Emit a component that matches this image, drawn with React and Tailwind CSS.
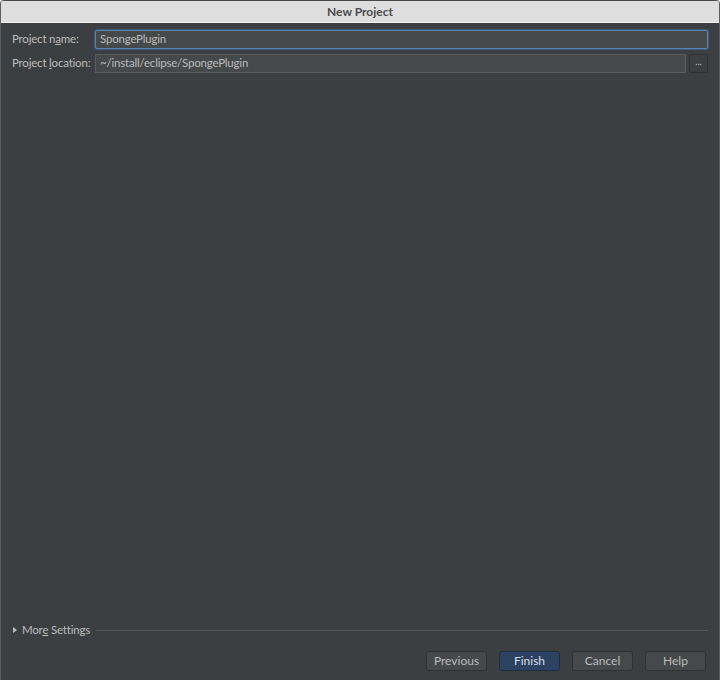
import React from "react";

const font = { fontFamily: 'Lato, "Noto Sans", sans-serif' };

function Btn({ children, primary }) {
  return (
    <div
      className={
        "w-[61px] h-[20px] flex items-center justify-center rounded-[3px] border text-[12px] whitespace-nowrap " +
        (primary
          ? "bg-[#2c4263] border-[#1f2d40] text-[#d8dde4]"
          : "bg-[#45494a] border-[#2f3233] text-[#bbbbbb]")
      }
    >
      {children}
    </div>
  );
}

export default function App() {
  return (
    <div
      className="w-[720px] h-[680px] flex flex-col bg-[#3c3f41] border-l border-r border-[#5a5d5f] overflow-hidden rounded-t-[4px]"
      style={font}
    >
      <div className="h-[23px] shrink-0 bg-[#dedede] border-t border-[#4a4a4a] border-b border-b-[#f4f4f4] flex items-center justify-center text-[12px] font-bold text-[#4b4b4b]">
        New Project
      </div>
      <div className="flex flex-col px-[11px] pt-[7px] gap-[6px] text-[11.5px] tracking-[-0.2px]">
        <div className="flex items-center h-[18px]">
          <div className="w-[83px] text-[#bbbbbb] whitespace-nowrap">
            Project n<span className="underline">a</span>me:
          </div>
          <div className="flex-1 h-[19px] border border-[#5c82ad] rounded-[2px] bg-[#45494a] flex items-center px-[4px] text-[#bbbbbb] shadow-[0_0_0_1px_#3a5a80] whitespace-nowrap">
            SpongePlugin
          </div>
        </div>
        <div className="flex items-center h-[18px]">
          <div className="w-[83px] text-[#bbbbbb] whitespace-nowrap">
            Project <span className="underline">l</span>ocation:
          </div>
          <div className="flex-1 h-[19px] border border-[#5a5d5f] bg-[#45494a] flex items-center px-[4px] text-[#bbbbbb] whitespace-nowrap">
            ~/install/eclipse/SpongePlugin
          </div>
          <div className="ml-[3px] w-[19px] h-[19px] border border-[#2f3233] rounded-[2px] bg-[#3c3f41] flex items-center justify-center text-[10px] text-[#bbbbbb] leading-none pb-[4px]">
            ...
          </div>
        </div>
      </div>
      <div className="flex-1" />
      <div className="flex items-center px-[11px] h-[16px] mb-[13px] text-[11.5px] tracking-[-0.2px]">
        <svg width="6" height="8" viewBox="0 0 6 8" className="mr-[4px]">
          <path d="M1 1 L5 4 L1 7 Z" fill="#bbbbbb" />
        </svg>
        <span className="text-[#bbbbbb] whitespace-nowrap">
          Mor<span className="underline">e</span> Settings
        </span>
        <div className="flex-1 ml-[6px] h-px bg-[#555555]" />
      </div>
      <div className="flex justify-end gap-[12px] pr-[13px] pb-[9px]">
        <Btn>Previous</Btn>
        <Btn primary>Finish</Btn>
        <Btn>Cancel</Btn>
        <Btn>Help</Btn>
      </div>
    </div>
  );
}
